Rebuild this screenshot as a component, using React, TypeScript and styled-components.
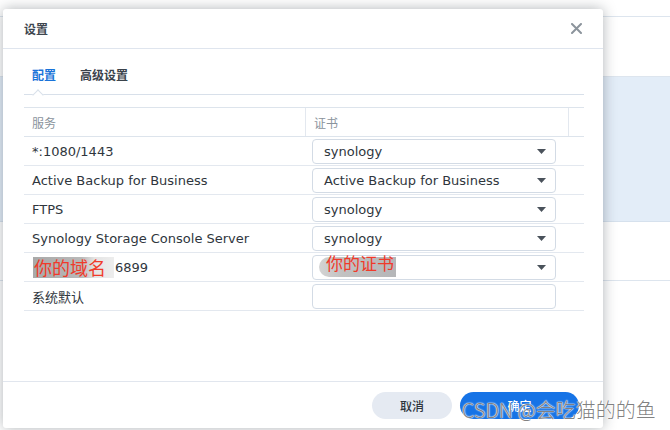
import React, { ReactElement } from 'react';
import styled, { createGlobalStyle } from 'styled-components';

type RowType = {
  service: string;
  cert: string;
  empty?: boolean;
  masked?: boolean;
};

const rows: RowType[] = [
  { service: '*:1080/1443', cert: 'synology' },
  { service: 'Active Backup for Business', cert: 'Active Backup for Business' },
  { service: 'FTPS', cert: 'synology' },
  { service: 'Synology Storage Console Server', cert: 'synology' },
  { service: '6899', cert: '', masked: true },
  { service: '系统默认', cert: '', empty: true },
];

const GlobalStyle = createGlobalStyle`
  html, body {
    margin: 0;
    padding: 0;
    background: #ffffff;
  }
  body {
    font-family: 'DejaVu Sans', 'Noto Sans CJK SC', sans-serif;
  }
`;

const Arrow = () => (
  <svg width="9" height="5" viewBox="0 0 9 5">
    <path d="M0 0 H9 L4.5 5 Z" fill="#4a525b" />
  </svg>
);

const CloseIcon = () => (
  <svg width="11" height="11" viewBox="0 0 11 11">
    <path d="M1 1 L10 10 M10 1 L1 10" stroke="#8c949c" strokeWidth="2" strokeLinecap="round" />
  </svg>
);

const App = (): ReactElement => (
  <>
    <GlobalStyle />
    <Page>
      {/* 뒤쪽 페이지 */}
      <Backdrop>
        <BackLine $height={16} />
        <BackLine $height={59} />
        <BackBand />
        <BackLine $height={58} />
        <BackFill />
      </Backdrop>

      <Dialog>
        <Header>
          <Title>设置</Title>
          <CloseButton>
            <CloseIcon />
          </CloseButton>
        </Header>

        <Body>
          <Tabs>
            <Tab $active>配置</Tab>
            <Tab>高级设置</Tab>
            <Notch />
          </Tabs>

          <Table>
            <HeadRow>
              <HeadCell>服务</HeadCell>
              <HeadCell $divider>证书</HeadCell>
              <HeadCell $divider />
            </HeadRow>
            {rows.map((row) => (
              <Row key={row.service}>
                <ServiceCell $masked={row.masked}>
                  {row.masked && <Mask>你的域名</Mask>}
                  {row.service}
                </ServiceCell>
                <CertCell>
                  <Select>
                    <SelectText>{row.cert}</SelectText>
                    {!row.empty && <Arrow />}
                    {row.masked && (
                      <CertMask>
                        <MaskText>你的证书</MaskText>
                      </CertMask>
                    )}
                  </Select>
                </CertCell>
              </Row>
            ))}
          </Table>
        </Body>

        <Footer>
          <Button>取消</Button>
          <Button $primary>确定</Button>
        </Footer>
      </Dialog>

      <Watermark>CSDN @会吃猫的的鱼</Watermark>
    </Page>
  </>
);

const Page = styled.div`
  position: relative;
  width: 670px;
  height: 430px;
  overflow: hidden;
  background: #ffffff;
`;

const Backdrop = styled.div`
  display: flex;
  flex-direction: column;
  height: 100%;
`;

const BackLine = styled.div<{ $height: number }>`
  height: ${({ $height }) => $height}px;
  border-bottom: 1px solid #dde5ee;
`;

const BackBand = styled.div`
  height: 144px;
  background: #e3edf8;
  border-bottom: 1px solid #d6e1ed;
`;

const BackFill = styled.div`
  flex: 1;
`;

const Dialog = styled.div`
  position: absolute;
  left: 3px;
  top: 9px;
  width: 600px;
  height: 419px;
  display: flex;
  flex-direction: column;
  background: #ffffff;
  border-radius: 3px;
  box-shadow: 0 0 14px rgba(30, 40, 50, 0.35);
`;

const Header = styled.div`
  height: 39px;
  padding: 0 21px 0 21px;
  display: flex;
  align-items: center;
  justify-content: space-between;
  border-bottom: 1px solid #dfe5ee;
`;

const Title = styled.div`
  font-family: 'Noto Sans CJK SC', sans-serif;
  font-size: 12px;
  font-weight: 600;
  color: #3e464f;
`;

const CloseButton = styled.div`
  display: flex;
`;

const Body = styled.div`
  flex: 1;
  padding: 0 19px 0 21px;
  display: flex;
  flex-direction: column;
`;

const Tabs = styled.div`
  position: relative;
  height: 45px;
  padding-left: 8px;
  display: flex;
  align-items: flex-end;
  gap: 24px;
  border-bottom: 1px solid #d8e0ea;
`;

const Tab = styled.div<{ $active?: boolean }>`
  padding-bottom: 11px;
  font-family: 'Noto Sans CJK SC', sans-serif;
  font-size: 12px;
  font-weight: 600;
  line-height: 16px;
  color: ${({ $active }) => ($active ? '#1a73d9' : '#3a424b')};
`;

const Notch = styled.div`
  position: absolute;
  left: 9px;
  bottom: -1px;
  width: 10px;
  height: 6px;
  background: #ffffff;
  &::before {
    content: '';
    position: absolute;
    left: 1px;
    top: 0;
    width: 7px;
    height: 7px;
    border-left: 1px solid #d8e0ea;
    border-top: 1px solid #d8e0ea;
    transform: translateY(2px) rotate(45deg);
    background: #ffffff;
  }
`;

const Table = styled.div`
  margin-top: 12px;
  border-top: 1px solid #dde4ec;
`;

const HeadRow = styled.div`
  height: 28px;
  display: grid;
  grid-template-columns: 281px 263px 16px;
  border-bottom: 1px solid #dde4ec;
`;

const HeadCell = styled.div<{ $divider?: boolean }>`
  display: flex;
  align-items: center;
  padding-left: 8px;
  font-family: 'Noto Sans CJK SC', sans-serif;
  font-size: 12px;
  color: #8a939c;
  border-left: ${({ $divider }) => ($divider ? '1px solid #e3e8ef' : 'none')};
`;

const Row = styled.div`
  height: 28px;
  display: grid;
  grid-template-columns: 281px 279px;
  border-bottom: 1px solid #e3e8ef;
`;

const ServiceCell = styled.div<{ $masked?: boolean }>`
  position: relative;
  display: flex;
  align-items: center;
  padding-left: ${({ $masked }) => ($masked ? '91px' : '8px')};
  padding-top: 1px;
  font-family: 'DejaVu Sans', 'Noto Sans CJK SC', sans-serif;
  font-size: 13px;
  color: #2f363d;
  white-space: nowrap;
`;

const CertCell = styled.div`
  display: flex;
  align-items: center;
  padding-left: 7px;
`;

const Select = styled.div`
  position: relative;
  width: 244px;
  height: 25px;
  box-sizing: border-box;
  padding: 0 9px 0 11px;
  display: flex;
  align-items: center;
  justify-content: space-between;
  border: 1px solid #d3dbe5;
  border-radius: 4px;
  background: #ffffff;
`;

const SelectText = styled.span`
  font-family: 'DejaVu Sans', 'Noto Sans CJK SC', sans-serif;
  font-size: 13px;
  color: #2f363d;
`;

const Mask = styled.span`
  position: absolute;
  left: 9px;
  top: 4px;
  width: 81px;
  height: 21px;
  display: flex;
  align-items: center;
  padding-left: 1px;
  box-sizing: border-box;
  font-family: 'Noto Sans CJK SC', sans-serif;
  font-size: 18px;
  line-height: 21px;
  color: #f03a2a;
  background: linear-gradient(90deg, #a9a9a9 0%, #b9b9b9 60%, #e4e4e4 76%, #ededed 100%);
`;

const CertMask = styled.span`
  position: absolute;
  left: 6px;
  top: 1px;
  width: 77px;
  height: 20px;
  border-radius: 10px 0 0 10px;
  background: linear-gradient(90deg, #d4d4d4 0%, #c2c2c2 30%, #b5b6b8 100%);
`;

const MaskText = styled.span`
  position: absolute;
  left: 7px;
  top: -4px;
  font-family: 'Noto Sans CJK SC', sans-serif;
  font-size: 17px;
  line-height: 20px;
  color: #f03a2a;
  white-space: nowrap;
`;

const Footer = styled.div`
  height: 46px;
  padding: 0 24px 0 0;
  display: flex;
  align-items: center;
  justify-content: flex-end;
  gap: 8px;
  border-top: 1px solid #e1e6ee;
`;

const Button = styled.div<{ $primary?: boolean }>`
  width: ${({ $primary }) => ($primary ? '119px' : '80px')};
  height: 27px;
  display: flex;
  align-items: center;
  justify-content: center;
  border-radius: 14px;
  font-family: 'Noto Sans CJK SC', sans-serif;
  font-size: 12px;
  font-weight: 500;
  color: ${({ $primary }) => ($primary ? '#ffffff' : '#2f363d')};
  background: ${({ $primary }) => ($primary ? '#1673e6' : '#e5eaf2')};
`;

const Watermark = styled.div`
  position: absolute;
  left: 462px;
  top: 397px;
  font-family: 'Noto Sans CJK SC', sans-serif;
  font-size: 20px;
  font-weight: 300;
  line-height: 26px;
  color: rgba(95, 95, 95, 0.8);
  text-shadow: 0 0 1px #ffffff, 0 0 1px #ffffff, 0 0 2px rgba(255, 255, 255, 0.8);
  white-space: nowrap;
`;

export default App;
